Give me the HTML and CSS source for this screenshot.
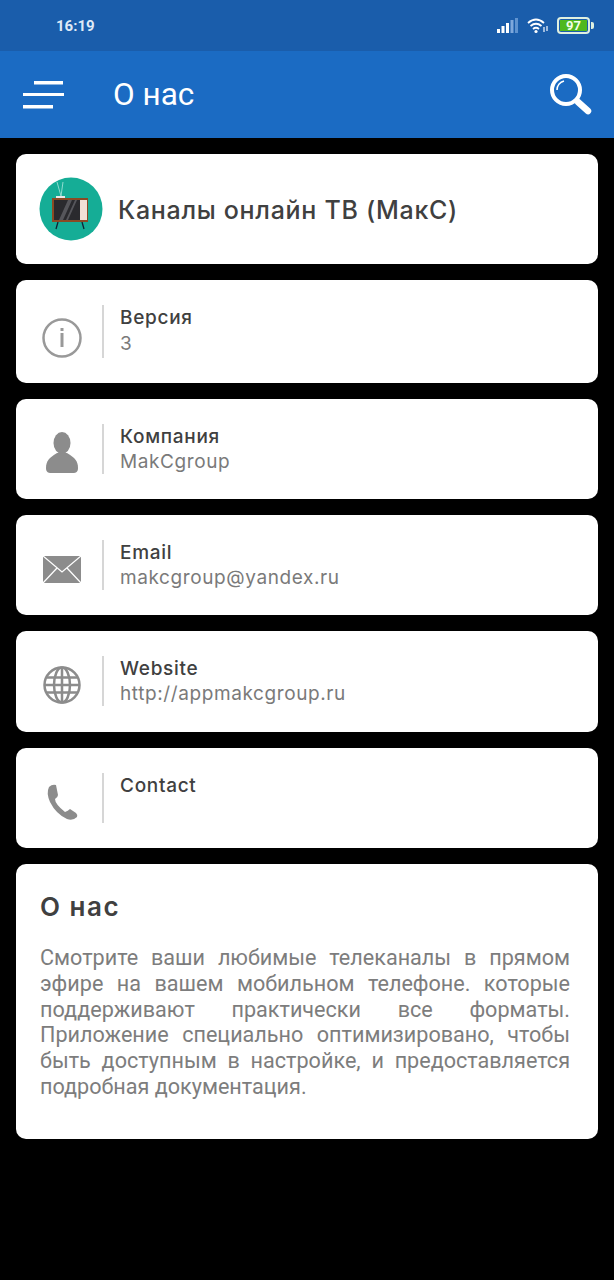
FILE: index.html
```html
<!DOCTYPE html>
<html lang="ru">
<head>
<meta charset="utf-8">
<title>О нас</title>
<link rel="stylesheet" href="styles.css">
</head>
<body>
<header class="status">
  <span class="time">16:19</span>
  <div class="status-icons">
    <svg class="signal" width="22" height="16" viewBox="0 0 22 16"><rect x="0" y="11" width="3" height="4" fill="#fff"/><rect x="4.500" y="8" width="3" height="7" fill="#fff"/><rect x="9" y="5" width="3" height="10" fill="#fff"/><rect x="13.500" y="2" width="3" height="13" fill="#7ea8dc"/><rect x="18" y="0" width="3" height="15" fill="#5f93d0"/></svg>
    <svg class="wifi" width="22" height="16" viewBox="0 0 22 16" fill="none" stroke="#fff" stroke-width="1.800"><path d="M1 5Q9-2 17 5"/><path d="M3.500 8Q9 3.500 14.500 8"/><path d="M6 11Q9 8.500 12 11"/><circle cx="9" cy="13.500" r="1.600" fill="#fff" stroke="none"/><path d="M17 9v5M20 8v5" stroke-width="1.300" stroke="#e3edf9"/></svg>
    <div class="battery"><div class="battery-body"><span class="battery-level">97</span></div><i class="battery-tip"></i></div>
  </div>
</header>
<header class="appbar">
  <svg class="menu" width="42" height="30" viewBox="0 0 42 30"><rect x="12" y="1" width="29" height="3.500" fill="#fff"/><rect x="1" y="13" width="41" height="3" fill="#fff"/><rect x="1" y="25" width="30" height="3.500" fill="#fff"/></svg>
  <h1 class="appbar-title">О нас</h1>
  <svg class="search" width="42" height="42" viewBox="0 0 42 42" fill="none" stroke="#fff"><circle cx="16" cy="16" r="14" stroke-width="4"/><path d="M7 16a9.500 9.500 0 0 1 7-9" stroke-width="1.600"/><path d="M28 28l10 9" stroke-width="6.500" stroke-linecap="round"/></svg>
</header>
<main class="content">
  <section class="card app-card">
    <svg class="logo" width="64" height="64" viewBox="0 0 64 64">
      <circle cx="32" cy="32" r="31.500" fill="#15ad96"/>
      <path d="M18 5l4 14M24 5l-2 14" stroke="#8fdcd0" stroke-width="1"/>
      <rect x="17" y="19" width="9" height="2" fill="#e8e8e8"/>
      <path d="M19 45l-2 7M43 45l2 7" stroke="#123" stroke-width="1.300"/>
      <rect x="13" y="21" width="36" height="24" fill="#8a4a24"/>
      <rect x="15" y="23" width="26" height="20" fill="#2a2a2e"/>
      <path d="M20 43l9-20h4l-9 20zM27 43l9-20h2l-9 20z" fill="#56565b"/>
      <rect x="41" y="23" width="7" height="20" fill="#f0e0d6"/>
    </svg>
    <h2 class="app-name">Каналы онлайн ТВ (МакС)</h2>
  </section>

  <section class="card row row-tall">
    <div class="row-icon">
      <svg width="40" height="40" viewBox="0 0 40 40" fill="none"><circle cx="20" cy="20" r="18.500" stroke="#999" stroke-width="2.500"/><rect x="18.500" y="15" width="3" height="14" fill="#999"/><rect x="18.500" y="10" width="3" height="3" fill="#999"/></svg>
    </div>
    <div class="row-text"><div class="row-label">Версия</div><div class="row-value">3</div></div>
  </section>

  <section class="card row">
    <div class="row-icon">
      <svg width="32" height="42" viewBox="0 0 32 42" fill="#8c8c8c"><ellipse cx="16" cy="11" rx="8.500" ry="11"/><path d="M0 36c0-7 3-10 11-15h10c8 5 11 8 11 15 0 4-2 5-5 5H5c-3 0-5-1-5-5z"/></svg>
    </div>
    <div class="row-text"><div class="row-label">Компания</div><div class="row-value">MakCgroup</div></div>
  </section>

  <section class="card row">
    <div class="row-icon">
      <svg width="38" height="27" viewBox="0 0 38 27"><rect width="38" height="27" fill="#8c8c8c"/><path d="M0 0l19 16L38 0M0 27l14-15M38 27L24 12" fill="none" stroke="#fff" stroke-width="1.300"/></svg>
    </div>
    <div class="row-text"><div class="row-label">Email</div><div class="row-value">makcgroup@yandex.ru</div></div>
  </section>

  <section class="card row row-web">
    <div class="row-icon">
      <svg width="38" height="38" viewBox="0 0 38 38" fill="none" stroke="#8c8c8c" stroke-width="2.500"><circle cx="19" cy="19" r="17.500"/><ellipse cx="19" cy="19" rx="8" ry="17.500"/><path d="M19 1.500v35M4 11.500h30M1.500 19h35M4 26.500h30"/></svg>
    </div>
    <div class="row-text"><div class="row-label">Website</div><div class="row-value">http://appmakcgroup.ru</div></div>
  </section>

  <section class="card row">
    <div class="row-icon">
      <svg width="32" height="37" viewBox="0 0 32 37" fill="#8c8c8c"><path d="M3 3Q6 0 10 1L12 11Q12 13 9 15Q9 20 19 28Q22 27 24 25L30 29Q32 31 31 33Q27 37 21 35Q10 30 4 18Q0 9 3 3z"/></svg>
    </div>
    <div class="row-text"><div class="row-label">Contact</div><div class="row-value"></div></div>
  </section>

  <section class="card about">
    <h2 class="about-title">О нас</h2>
    <p class="about-text">Смотрите ваши любимые телеканалы в прямом эфире на вашем мобильном телефоне. которые поддерживают практически все форматы. Приложение специально оптимизировано, чтобы быть доступным в настройке, и предоставляется подробная документация.</p>
  </section>
</main>
</body>
</html>
```

FILE: styles.css
```css
* { box-sizing: border-box; }
html, body { margin: 0; padding: 0; }
body { background: #000; width: 614px; height: 1280px; overflow: hidden; font-family: "Inter", "Noto Sans", sans-serif; }

.status { height: 51px; background: #1a5dab; display: flex; align-items: center; justify-content: space-between; padding: 0 20px 0 56px; }
.time { color: #dfeaf7; font: 700 15px "Roboto", sans-serif; }
.status-icons { display: flex; align-items: center; gap: 8px; }
.signal, .wifi { display: block; }
.battery { display: flex; align-items: center; gap: 1px; }
.battery-body { width: 33px; height: 17px; border: 2px solid #dff0e0; border-radius: 4px; padding: 1px; display: flex; }
.battery-level { flex: 1; background: #4fb81e; color: #f2ffe8; font: 700 13px/11px "Roboto", sans-serif; text-align: center; }
.battery-tip { width: 3px; height: 7px; background: #dff0e0; border-radius: 0 2px 2px 0; }

.appbar { height: 87px; background: #1b6bc3; display: flex; align-items: center; padding: 0 22px 0 22px; }
.menu { display: block; }
.appbar-title { margin: 0 0 0 49px; flex: 1; color: #fff; font: 400 31.500px "Roboto", sans-serif; }
.search { display: block; }

.content { padding: 16px; display: flex; flex-direction: column; gap: 16px; }
.card { background: #fff; border-radius: 10px; }

.app-card { height: 110px; display: flex; align-items: center; padding-left: 23px; gap: 15px; }
.logo { display: block; }
.app-name { margin: 2px 0 0; font-size: 25px; font-weight: 500; color: #404040; letter-spacing: 0.7px; }

.row { height: 100px; display: flex; padding-top: 25px; }
.row-tall { height: 103px; }
.row-web { height: 101px; }
.row-icon { width: 88px; height: 50px; border-right: 2px solid #d6d6d6; display: flex; align-items: center; justify-content: center; padding: 8px 0 0 6px; }
.row-tall .row-icon { height: 53px; padding-top: 12px; }
.row-text { padding-left: 16px; }
.row-label { font-size: 19px; font-weight: 500; line-height: 25px; color: #404040; letter-spacing: 0.7px; }
.row-value { font-size: 19px; font-weight: 400; line-height: 25px; color: #7a7a7a; letter-spacing: 0.6px; }
.row-tall .row-value { line-height: 27px; }

.about { height: 275px; padding: 26px 28px 0 24px; }
.about-title { margin: 0; font-size: 26px; line-height: 34px; font-weight: 600; color: #404040; letter-spacing: 1.5px; }
.about-text { margin: 21px 0 0; font: 400 21.600px/25.800px "Roboto", sans-serif; color: #7d7d7d; text-align: justify; }
```
